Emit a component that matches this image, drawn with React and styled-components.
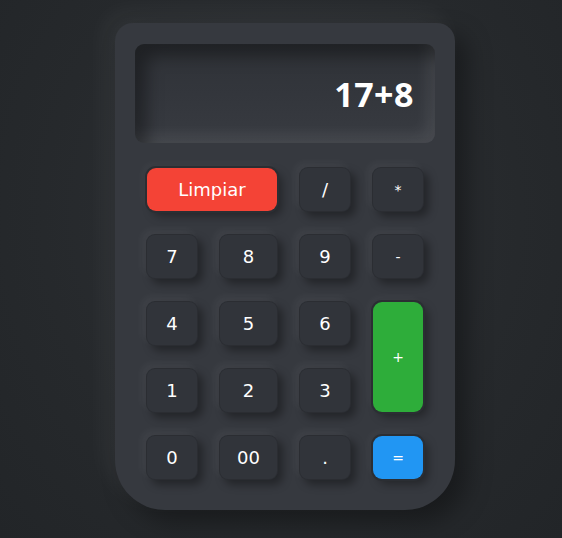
import React from 'react';
import styled, { createGlobalStyle } from 'styled-components';

const GlobalStyle = createGlobalStyle`
    html, body {
        margin: 0;
        padding: 0;
        background: #24272a;
        font-family: "DejaVu Sans", sans-serif;
    }
`

const Page = styled.div`
    width: 562px;
    height: 538px;
    display: flex;
    justify-content: center;
    align-items: flex-start;
    padding: 23px 0 0 8px;
    box-sizing: border-box;
    background: radial-gradient(ellipse at 50% 40%, #2d3034 0%, #26292c 60%, #222528 100%);
    overflow: hidden;
`

const Body = styled.div`
    width: 340px;
    height: 487px;
    box-sizing: border-box;
    padding: 21px 20px 30px 20px;
    background: #36393f;
    border-radius: 18px 18px 50px 50px;
    box-shadow: -10px -10px 25px rgba(255, 255, 255, 0.05), 12px 12px 25px rgba(0, 0, 0, 0.35);
    display: flex;
    flex-direction: column;
    align-items: center;
`

const Display = styled.div`
    width: 300px;
    height: 99px;
    box-sizing: border-box;
    border-radius: 9px;
    background: linear-gradient(180deg, #2f3237 0%, #33363c 50%, #383b41 100%);
    box-shadow: inset 12px 12px 16px rgba(0, 0, 0, 0.35), inset -8px -8px 14px rgba(255, 255, 255, 0.08);
    display: flex;
    align-items: center;
    justify-content: flex-end;
    padding: 0 21px 0 0;
    color: #ffffff;
    font-family: "Open Sans", "DejaVu Sans", sans-serif;
    font-size: 34px;
    font-weight: 700;
    letter-spacing: 0.5px;
`

const Keys = styled.div`
    margin-top: 24px;
    display: grid;
    grid-template-columns: 52px 59px 52px 52px;
    grid-template-rows: repeat(5, 45px);
    column-gap: 21px;
    row-gap: 22px;
`

const Key = styled.button`
    grid-column: ${p => p.$span ? `span ${p.$span}` : 'auto'};
    grid-row: ${p => p.$rows ? `span ${p.$rows}` : 'auto'};
    border: none;
    border-radius: 9px;
    background: ${p => p.$color || '#31343a'};
    color: #ffffff;
    font-family: "DejaVu Sans", sans-serif;
    font-size: ${p => p.$small ? '14px' : '18px'};
    font-weight: 400;
    padding: 0;
    cursor: pointer;
    box-shadow: ${p => p.$color
        ? '0 0 0 2px #2b2e33, 5px 5px 10px rgba(0, 0, 0, 0.35), -4px -4px 10px rgba(255, 255, 255, 0.04)'
        : '5px 5px 9px rgba(0, 0, 0, 0.35), -4px -4px 9px rgba(255, 255, 255, 0.05), inset 0 0 0 1px rgba(0, 0, 0, 0.12)'};
    margin: ${p => p.$color ? '1px' : '0'};
`

const RED = '#f44336';
const GREEN = '#2ead3a';
const BLUE = '#2196f3';

const App = () => {
    return (
        <Page>
            <GlobalStyle />
            <Body>
                <Display>17+8</Display>
                <Keys>
                    <Key $span={2} $color={RED}>Limpiar</Key>
                    <Key>/</Key>
                    <Key $small>*</Key>
                    <Key>7</Key>
                    <Key>8</Key>
                    <Key>9</Key>
                    <Key $small>-</Key>
                    <Key>4</Key>
                    <Key>5</Key>
                    <Key>6</Key>
                    <Key $rows={2} $color={GREEN} $small>+</Key>
                    <Key>1</Key>
                    <Key>2</Key>
                    <Key>3</Key>
                    <Key>0</Key>
                    <Key>00</Key>
                    <Key>.</Key>
                    <Key $color={BLUE} $small>=</Key>
                </Keys>
            </Body>
        </Page>
    );
};

export default App;
